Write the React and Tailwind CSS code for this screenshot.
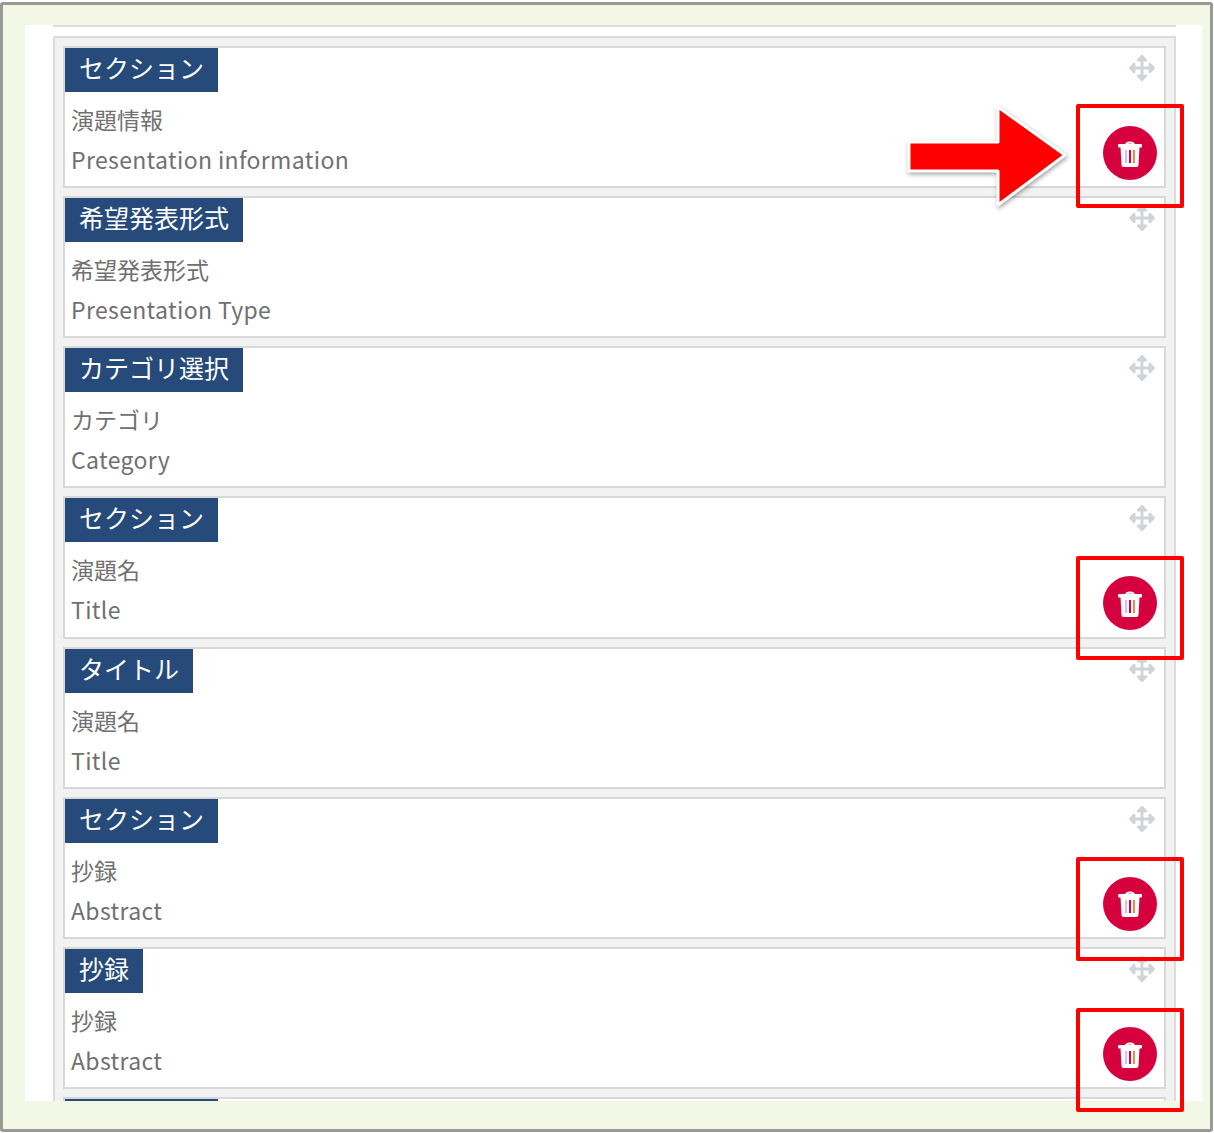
import React from 'react';
import { FaArrowsAlt } from 'react-icons/fa';

const rows = [
  { label: 'セクション', ja: '演題情報', en: 'Presentation information' },
  { label: '希望発表形式', ja: '希望発表形式', en: 'Presentation Type' },
  { label: 'カテゴリ選択', ja: 'カテゴリ', en: 'Category' },
  { label: 'セクション', ja: '演題名', en: 'Title' },
  { label: 'タイトル', ja: '演題名', en: 'Title' },
  { label: 'セクション', ja: '抄録', en: 'Abstract' },
  { label: '抄録', ja: '抄録', en: 'Abstract' },
  { label: 'セクション', ja: '', en: '' },
];

const Row = ({ row }) => (
  <div className="shrink-0 h-[142.14px] border-2 border-[#d8d8d8] bg-white">
    <div className="flex items-start justify-between">
      <div className="h-[44px] px-[14px] bg-[#264a79] text-white text-[25px] leading-[39px]">{row.label}</div>
      <FaArrowsAlt className="mt-[7px] mr-[9px] text-[26px] text-[#cfd4da]" />
    </div>
    <div className="px-[6px] pt-[7px] text-[#707070] text-[23px] leading-[40px]">
      <p>{row.ja}</p>
      <p className="tracking-[0.35px]">{row.en}</p>
    </div>
  </div>
);

const TrashIcon = () => (
  <svg width="24" height="27" viewBox="0 0 24 27">
    <path d="M8 5 C8 1.5 16 1.5 16 5" fill="none" stroke="#ffffff" strokeWidth="2" />
    <rect x="0" y="4" width="24" height="3.5" rx="1" fill="#ffffff" />
    <path d="M2.5 7 H21.5 L20.5 25 Q20.4 27 18.5 27 H5.5 Q3.6 27 3.5 25 Z" fill="#ffffff" />
    <rect x="7" y="10" width="2" height="13" fill="#f4b6cc" />
    <rect x="11" y="10" width="2" height="13" fill="#d6004f" />
    <rect x="15" y="10" width="2" height="13" fill="#f08a3c" />
  </svg>
);

const DeleteMark = ({ className }) => (
  <div className={`absolute left-[1076px] w-[108px] h-[104px] border-[4px] border-[#ff0000] rounded-[2px] flex items-center justify-center pr-[1px] ${className}`}>
    <button className="w-[54px] h-[54px] rounded-full bg-[#d6003f] flex items-center justify-center">
      <TrashIcon />
    </button>
  </div>
);

const App = () => {
  return (
    <div className="relative w-[1214px] h-[1133px] bg-white pt-[2px] pr-[1px] pb-[1px] overflow-hidden font-['Noto_Sans_CJK_JP','Noto_Sans',sans-serif]">
      <div className="h-full border-[3px] border-[#999995] rounded-[3px] bg-[#f3f7e6] pt-[20px] pl-[22px] pr-[8px] pb-[28px]">
        <div className="h-full bg-white pl-[28px] pr-[26px] overflow-hidden">
          <div className="h-[2px] bg-[#dcdcdc]" />
          <div className="mt-[9px] border-2 border-[#dcdcdc] bg-[#f2f2f2] px-2 pt-2 flex flex-col gap-[8px]">
            {rows.map((row, i) => (
              <Row key={i} row={row} />
            ))}
          </div>
        </div>
      </div>

      {/* arrow */}
      <svg className="absolute left-[900px] top-[100px] drop-shadow-[1px_2px_2px_rgba(0,0,0,0.35)]" width="175" height="115" viewBox="900 100 175 115">
        <polygon points="909,142 998,142 998,107 1065,155 998,205 998,171 909,171" fill="#ff0000" stroke="#ffffff" strokeWidth="3" strokeLinejoin="round" />
      </svg>

      <DeleteMark className="top-[104px] pb-[6px]" />
      <DeleteMark className="top-[556px] pb-[10px]" />
      <DeleteMark className="top-[857px] pb-[11px]" />
      <DeleteMark className="top-[1008px] pb-[12px]" />
    </div>
  );
};

export default App;
